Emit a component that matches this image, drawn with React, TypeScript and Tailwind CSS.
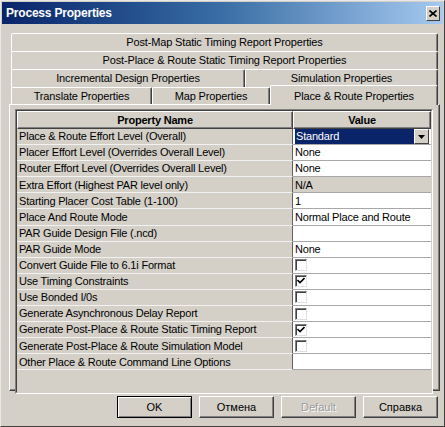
import React from 'react';

type Row = {
  name: string;
  value?: string;
  kind: 'text' | 'gray' | 'check' | 'combo';
  checked?: boolean;
};

const rows: Row[] = [
  { name: 'Place & Route Effort Level (Overall)', value: 'Standard', kind: 'combo' },
  { name: 'Placer Effort Level (Overrides Overall Level)', value: 'None', kind: 'text' },
  { name: 'Router Effort Level (Overrides Overall Level)', value: 'None', kind: 'text' },
  { name: 'Extra Effort (Highest PAR level only)', value: 'N/A', kind: 'gray' },
  { name: 'Starting Placer Cost Table (1-100)', value: '1', kind: 'text' },
  { name: 'Place And Route Mode', value: 'Normal Place and Route', kind: 'text' },
  { name: 'PAR Guide Design File (.ncd)', value: '', kind: 'text' },
  { name: 'PAR Guide Mode', value: 'None', kind: 'text' },
  { name: 'Convert Guide File to 6.1i Format', kind: 'check' },
  { name: 'Use Timing Constraints', kind: 'check', checked: true },
  { name: 'Use Bonded I/0s', kind: 'check' },
  { name: 'Generate Asynchronous Delay Report', kind: 'check' },
  { name: 'Generate Post-Place & Route Static Timing Report', kind: 'check', checked: true },
  { name: 'Generate Post-Place & Route Simulation Model', kind: 'check' },
  { name: 'Other Place & Route Command Line Options', value: '', kind: 'text' },
];

// raised tab edge: white top/left, dark right
const tab =
  'flex items-center justify-center border-t border-l border-r border-t-white border-l-white border-r-[#404040] shadow-[inset_-1px_0_#808080] bg-[#d4d0c8] rounded-t-[2px]';

const Checkbox = ({ checked }: { checked?: boolean }) => (
  <div className="w-[12px] h-[12px] bg-white border border-t-[#808080] border-l-[#808080] border-b-[#e0e0e0] border-r-[#e0e0e0] shadow-[inset_1px_1px_#404040] flex items-center justify-center">
    {checked && (
      <svg width="8" height="8" viewBox="0 0 8 8">
        <path d="M0.5 3 L3 5.5 L7.5 1" stroke="#000" strokeWidth="1.6" fill="none" />
      </svg>
    )}
  </div>
);

const Button = ({ label, isDefault, disabled }: { label: string; isDefault?: boolean; disabled?: boolean }) => (
  <div
    className={`w-[75px] h-[22px] flex items-center justify-center text-[11px] bg-[#d4d0c8] ${
      isDefault
        ? 'border border-black shadow-[inset_1px_1px_#fff,inset_-1px_-1px_#808080]'
        : 'border border-t-white border-l-white border-b-[#404040] border-r-[#404040] shadow-[inset_-1px_-1px_#808080]'
    } ${disabled ? 'text-[#9a9a9a] [text-shadow:1px_1px_#fff]' : 'text-black'}`}
  >
    {label}
  </div>
);

export default function App() {
  return (
    <div className="w-[445px] h-[427px] bg-[#d4d0c8] border border-t-[#e8e8e8] border-l-[#e8e8e8] border-r-[#404040] border-b-[#404040] font-['Liberation_Sans',Arial,sans-serif] text-black overflow-hidden flex flex-col">
      {/* Title bar */}
      <div className="mx-[1px] mt-[1px] h-[22px] bg-gradient-to-r from-[#0a246a] via-[#3a6ea5] to-[#a6caf0] flex items-center justify-between pl-[4px] pr-[3px]">
        <span className="text-white font-bold text-[12px] tracking-[-0.2px]">Process Properties</span>
        <div className="w-[14px] h-[15px] bg-[#d4d0c8] border border-t-white border-l-white border-b-[#404040] border-r-[#404040] flex items-center justify-center">
          <svg width="8" height="7" viewBox="0 0 8 7">
            <path d="M0.5 0.5 L7.5 6.5 M7.5 0.5 L0.5 6.5" stroke="#000" strokeWidth="1.6" />
          </svg>
        </div>
      </div>

      {/* Tabs */}
      <div className="ml-[10px] w-[427px] mt-[9px] flex flex-col text-[11px] tracking-[-0.15px]">
        <div className={`${tab} h-[18px]`}>Post-Map Static Timing Report Properties</div>
        <div className={`${tab} h-[18px]`}>Post-Place &amp; Route Static Timing Report Properties</div>
        <div className="flex h-[18px]">
          <div className={`${tab} w-[234px]`}>Incremental Design Properties</div>
          <div className={`${tab} flex-1`}>Simulation Properties</div>
        </div>
        <div className="flex h-[17px] items-end">
          <div className={`${tab} w-[141px] h-[17px]`}>Translate Properties</div>
          <div className={`${tab} w-[118px] h-[17px]`}>Map Properties</div>
          <div className={`${tab} flex-1 h-[20px] -mb-[1px] relative z-10 items-start pt-[2px]`}>Place &amp; Route Properties</div>
        </div>
      </div>

      {/* Panel */}
      <div className="ml-[8px] w-[431px] h-[287px] border border-t-white border-l-white border-r-[#404040] border-b-[#404040] shadow-[inset_-1px_-1px_#808080] pt-[4px] pl-[5px]">
        <div className="w-[418px] border border-t-[#808080] border-l-[#808080] border-b-white border-r-white">
          <div className="border border-t-[#404040] border-l-[#404040] border-b-[#d4d0c8] border-r-[#d4d0c8] text-[11px] tracking-[-0.2px]">
            {/* Header */}
            <div className="flex h-[18px] font-bold">
              <div className="w-[276px] flex items-center justify-center border border-t-white border-l-white border-b-[#404040] border-r-[#404040] shadow-[inset_-1px_-1px_#808080]">
                Property Name
              </div>
              <div className="flex-1 flex items-center justify-center border border-t-white border-l-white border-b-[#404040] border-r-[#404040] shadow-[inset_-1px_-1px_#808080]">
                Value
              </div>
            </div>
            {rows.map((r) => (
              <div key={r.name} className="flex h-[16.1px]">
                <div className="w-[276px] pl-[2px] flex items-center bg-[#d4d0c8] border-b border-r border-b-[#f2f2f2] border-r-[#606060] whitespace-nowrap overflow-hidden">
                  {r.name}
                </div>
                <div
                  className={`flex-1 flex items-center border-b border-b-[#a8a8a8] overflow-hidden ${
                    r.kind === 'gray' ? 'bg-[#d4d0c8]' : 'bg-white'
                  } ${r.kind === 'combo' ? 'pl-[2px] pr-[2px]' : 'pl-[2px]'}`}
                >
                  {r.kind === 'combo' ? (
                    <div className="flex w-full h-[15px] items-center">
                      <div className="flex-1 h-full bg-[#0a246a] text-white flex items-center pl-[1px]">{r.value}</div>
                      <div className="w-[15px] h-[15px] bg-[#d4d0c8] border border-t-white border-l-white border-b-[#404040] border-r-[#404040] flex items-center justify-center">
                        <svg width="7" height="4" viewBox="0 0 7 4">
                          <path d="M0 0 H7 L3.5 4 Z" fill="#000" />
                        </svg>
                      </div>
                    </div>
                  ) : r.kind === 'check' ? (
                    <Checkbox checked={r.checked} />
                  ) : (
                    r.value
                  )}
                </div>
              </div>
            ))}
            <div className="h-[22px] bg-[#d4d0c8]" />
          </div>
        </div>
      </div>

      {/* Buttons */}
      <div className="flex justify-end gap-[7px] pr-[6px] mt-[5px]">
        <Button label="OK" isDefault />
        <Button label="Отмена" />
        <Button label="Default" disabled />
        <Button label="Справка" />
      </div>
    </div>
  );
}
